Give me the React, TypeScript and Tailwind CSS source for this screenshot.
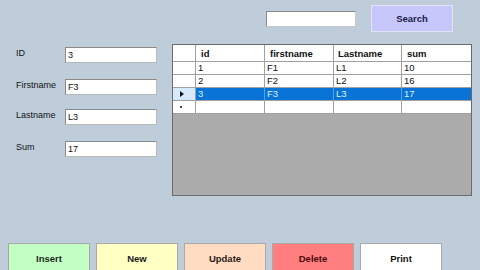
import React from "react";

const rows = [
  { id: "1", f: "F1", l: "L1", s: "10" },
  { id: "2", f: "F2", l: "L2", s: "16" },
  { id: "3", f: "F3", l: "L3", s: "17", sel: true },
];

function Field({ label, value, mt }: { label: string; value: string; mt: string }) {
  return (
    <div className={`flex items-start ${mt}`}>
      <div className="w-[49px] text-[9px] leading-[10px] pt-[1px] text-[#111]">{label}</div>
      <div className="w-[92px] h-[16px] bg-white border border-[#8a8a8a] border-b-[#b8b8b8] border-r-[#b8b8b8] text-[9px] leading-[14px] pl-[2px] text-[#111]">
        {value}
      </div>
    </div>
  );
}

function Btn({ label, cls }: { label: string; cls: string }) {
  return (
    <div className={`w-[82px] h-[30px] border border-[#a9a9a9] flex items-start justify-center pt-[9px] font-bold text-[9.5px] leading-[12px] ${cls}`}>
      {label}
    </div>
  );
}

export default function App() {
  return (
    <div
      className="w-[480px] h-[270px] bg-[#bfcddb] overflow-hidden flex flex-col"
      style={{ fontFamily: '"Liberation Sans", Arial, sans-serif' }}
    >
      {/* top bar */}
      <div className="shrink-0 flex justify-end items-start pt-[5px] pr-[27px] h-[32px]">
        <div className="mt-[6px] w-[90px] h-[16px] bg-white border border-[#8a8a8a] border-b-[#c8c8c8] border-r-[#c8c8c8]" />
        <div className="ml-[15px] w-[82px] h-[27px] bg-[#c8c7fb] border border-[#e4e4f8] flex items-center justify-center pt-[1px] font-bold text-[9.5px] text-[#1b1b4a]">
          Search
        </div>
      </div>

      {/* main */}
      <div className="shrink-0 flex h-[211px]">
        <div className="pl-[16px] pt-[15px] w-[172px] flex flex-col">
          <Field label="ID" value="3" mt="" />
          <Field label="Firstname" value="F3" mt="mt-[16px]" />
          <Field label="Lastname" value="L3" mt="mt-[14px]" />
          <Field label="Sum" value="17" mt="mt-[16px]" />
        </div>
        <div className="mt-[12px] w-[300px] h-[152px] border border-[#6a6a6a] bg-[#ababab] flex flex-col">
          <div className="grid grid-cols-[23px_69px_69px_68px_69px] bg-white h-[17px] border-b border-[#a0a0a0] font-bold text-[9.5px] leading-[17px] text-[#111]">
            <div className="border-r border-[#a0a0a0]" />
            <div className="border-r border-[#a0a0a0] pl-[5px]">id</div>
            <div className="border-r border-[#a0a0a0] pl-[5px]">firstname</div>
            <div className="border-r border-[#a0a0a0] pl-[4px]">Lastname</div>
            <div className="pl-[5px]">sum</div>
          </div>
          {rows.map((r) => (
            <div
              key={r.id}
              className="grid grid-cols-[23px_69px_69px_68px_69px] h-[13px] border-b border-[#a0a0a0] text-[9.5px] leading-[12px]"
            >
              <div className={`border-r border-[#a0a0a0] flex items-center pl-[7px] ${r.sel ? "bg-[#d6eaff]" : "bg-white"}`}>
                {r.sel && (
                  <svg width="4" height="6" viewBox="0 0 4 6">
                    <path d="M0 0 L4 3 L0 6 Z" fill="#111" />
                  </svg>
                )}
              </div>
              {[r.id, r.f, r.l, r.s].map((v, i) => (
                <div
                  key={i}
                  className={`pl-[2px] ${i < 3 ? "border-r border-[#a0a0a0]" : ""} ${
                    r.sel ? "bg-[#0a74d6] text-[#d8f0ff]" : "bg-white text-[#111]"
                  } ${r.sel && i < 3 ? "border-r-[#5aa0e0]" : ""}`}
                >
                  {v}
                </div>
              ))}
            </div>
          ))}
          <div className="grid grid-cols-[23px_69px_69px_68px_69px] h-[13px] border-b border-[#a0a0a0] bg-white">
            <div className="border-r border-[#a0a0a0] flex items-center pl-[7px]">
              <div className="w-[2px] h-[2px] bg-[#111] rounded-full" />
            </div>
            <div className="border-r border-[#a0a0a0]" />
            <div className="border-r border-[#a0a0a0]" />
            <div className="border-r border-[#a0a0a0]" />
            <div />
          </div>
        </div>
      </div>

      {/* bottom buttons */}
      <div className="shrink-0 flex gap-[6px] pl-[8px]">
        <Btn label="Insert" cls="bg-[#c2ffc2] text-[#1a2a1a]" />
        <Btn label="New" cls="bg-[#ffffc4] text-[#1a1a1a]" />
        <Btn label="Update" cls="bg-[#ffdcc2] text-[#2a1a1a]" />
        <Btn label="Delete" cls="bg-[#ff7f80] text-[#4a0a0a]" />
        <Btn label="Print" cls="bg-white text-[#111]" />
      </div>
    </div>
  );
}
